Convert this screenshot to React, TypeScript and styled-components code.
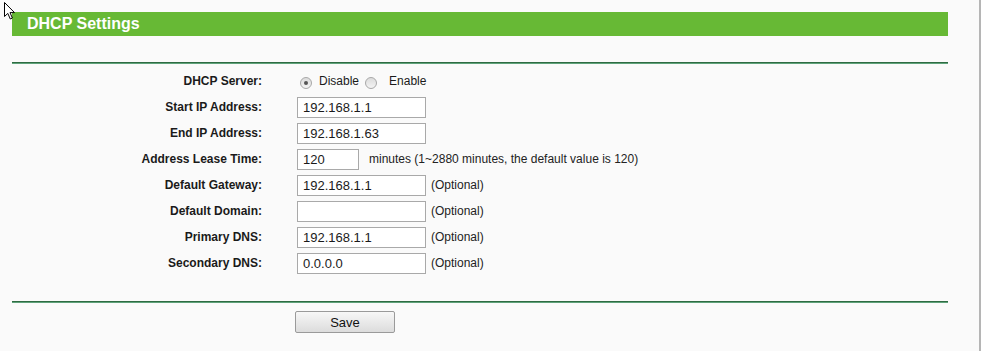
import { Fragment } from 'react';
import styled, { createGlobalStyle } from 'styled-components';

const GlobalStyle = createGlobalStyle`
  html, body {
    margin: 0;
    padding: 0;
    background: #ffffff;
    font-family: 'Liberation Sans', Arial, sans-serif;
  }
`;

const Frame = styled.div`
  position: relative;
  width: 979px;
  height: 351px;
  background: #fafafa;
  border-right: 2px solid #b5b5b5;
  box-sizing: content-box;
  overflow: hidden;
`;

const Content = styled.div`
  width: 936px;
  padding: 12px 0 0 12px;
`;

const TitleBar = styled.div`
  height: 24px;
  background: #67b935;
  color: #fff;
  font-size: 16px;
  font-weight: bold;
  line-height: 24px;
  padding-left: 15px;
`;

const Rule = styled.div<{ $gap: number }>`
  margin-top: ${p => p.$gap}px;
  height: 1px;
  background: #2f6b42;
  border-bottom: 1px solid #5fa27a;
`;

const Form = styled.div`
  display: grid;
  grid-template-columns: 250px auto;
  grid-auto-rows: 26px;
  column-gap: 35px;
  padding-top: 4px;
  font-size: 12px;
  color: #1a1a1a;
`;

const Label = styled.div`
  display: flex;
  align-items: center;
  justify-content: flex-end;
  font-weight: bold;
`;

const Field = styled.div`
  display: flex;
  align-items: center;
`;

const TextBox = styled.input<{ $w?: number }>`
  box-sizing: border-box;
  width: ${p => p.$w ?? 129}px;
  height: 21px;
  border: 1px solid #a9a9a9;
  background: #fff;
  padding: 1px 0 0 5px;
  font-family: 'Liberation Sans', Arial, sans-serif;
  font-size: 13px;
  color: #1a1a1a;
  outline: none;
`;

const Note = styled.span<{ $gap: number }>`
  margin-left: ${p => p.$gap}px;
  color: #222;
`;

const Radio = styled.span<{ $on?: boolean; $ml: number; $mr: number }>`
  position: relative;
  box-sizing: border-box;
  width: 12px;
  height: 12px;
  margin: 3px ${p => p.$mr}px 0 ${p => p.$ml}px;
  border-radius: 50%;
  border: 1px solid #a8a8a8;
  background: linear-gradient(#dcdcdc, #f4f4f4);
  &::after {
    content: '';
    display: ${p => (p.$on ? 'block' : 'none')};
    position: absolute;
    left: 3px;
    top: 3px;
    width: 4px;
    height: 4px;
    border-radius: 50%;
    background: #555;
  }
`;

const ButtonRow = styled.div`
  padding: 8px 0 0 283px;
`;

const SaveButton = styled.button`
  box-sizing: border-box;
  width: 100px;
  height: 22px;
  border: 1px solid #9a9a9a;
  border-radius: 2px;
  background: linear-gradient(#f7f7f7, #dcdcdc);
  font-family: 'Liberation Sans', Arial, sans-serif;
  font-size: 13px;
  color: #111;
  padding: 0;
`;

const Pointer = styled.svg`
  position: absolute;
  left: 3px;
  top: 1px;
`;

const rows: { label: string; value: string; note?: string; width?: number; gap?: number }[] = [
  { label: 'Start IP Address:', value: '192.168.1.1' },
  { label: 'End IP Address:', value: '192.168.1.63' },
  {
    label: 'Address Lease Time:',
    value: '120',
    width: 62,
    note: 'minutes (1~2880 minutes, the default value is 120)',
    gap: 10,
  },
  { label: 'Default Gateway:', value: '192.168.1.1', note: '(Optional)' },
  { label: 'Default Domain:', value: '', note: '(Optional)' },
  { label: 'Primary DNS:', value: '192.168.1.1', note: '(Optional)' },
  { label: 'Secondary DNS:', value: '0.0.0.0', note: '(Optional)' },
];

function App() {
  return (
    <Frame>
      <GlobalStyle />
      <Content>
        <TitleBar>DHCP Settings</TitleBar>
        <Rule $gap={26} />
        <Form>
          <Label>DHCP Server:</Label>
          <Field>
            <Radio $on $ml={3} $mr={7} />
            <span>Disable</span>
            <Radio $ml={6} $mr={12} />
            <span>Enable</span>
          </Field>
          {rows.map(r => (
            <Fragment key={r.label}>
              <Label>{r.label}</Label>
              <Field>
                <TextBox $w={r.width} defaultValue={r.value} />
                {r.note && <Note $gap={r.gap ?? 5}>{r.note}</Note>}
              </Field>
            </Fragment>
          ))}
        </Form>
        <Rule $gap={25} />
        <ButtonRow>
          <SaveButton>Save</SaveButton>
        </ButtonRow>
      </Content>
      <Pointer width='14' height='20' viewBox='0 0 14 20'>
        <path
          d='M1.5 1.5 L1.5 15.5 L4.8 12.4 L7.3 18 L9.4 17 L7 11.6 L11.5 11.6 Z'
          fill='#fff'
          stroke='#000'
          strokeWidth='1'
          strokeLinejoin='miter'
        />
      </Pointer>
    </Frame>
  );
}

export default App;
